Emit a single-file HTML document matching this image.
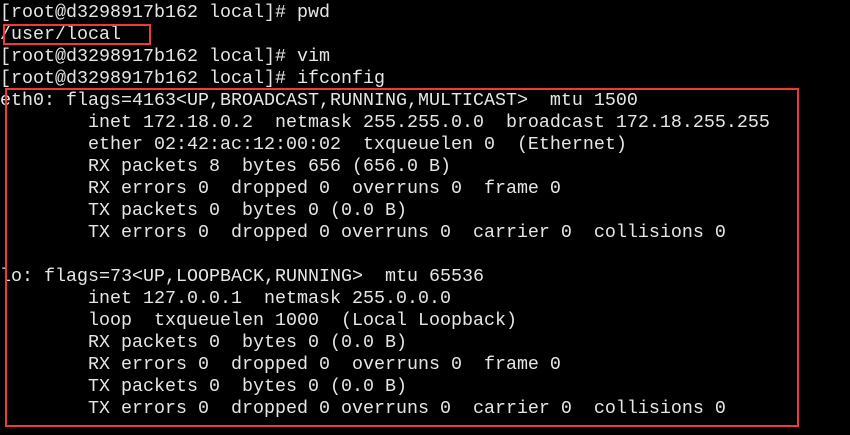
<!DOCTYPE html><html><head><style>
body{margin:0;width:850px;height:435px;background:#000;overflow:hidden;position:relative}
pre{margin:0;position:absolute;left:0;top:2px;font-family:"Liberation Mono",monospace;font-size:18.33px;line-height:22px;color:#e6e6e6}
.b{position:absolute;border:2px solid #f03a3a;box-sizing:border-box}
</style></head><body>
<pre>[root@d3298917b162 local]# pwd
/user/local
[root@d3298917b162 local]# vim
[root@d3298917b162 local]# ifconfig
eth0: flags=4163&lt;UP,BROADCAST,RUNNING,MULTICAST&gt;  mtu 1500
        inet 172.18.0.2  netmask 255.255.0.0  broadcast 172.18.255.255
        ether 02:42:ac:12:00:02  txqueuelen 0  (Ethernet)
        RX packets 8  bytes 656 (656.0 B)
        RX errors 0  dropped 0  overruns 0  frame 0
        TX packets 0  bytes 0 (0.0 B)
        TX errors 0  dropped 0 overruns 0  carrier 0  collisions 0

lo: flags=73&lt;UP,LOOPBACK,RUNNING&gt;  mtu 65536
        inet 127.0.0.1  netmask 255.0.0.0
        loop  txqueuelen 1000  (Local Loopback)
        RX packets 0  bytes 0 (0.0 B)
        RX errors 0  dropped 0  overruns 0  frame 0
        TX packets 0  bytes 0 (0.0 B)
        TX errors 0  dropped 0 overruns 0  carrier 0  collisions 0</pre>
<div class="b" style="left:3px;top:24px;width:148px;height:21px"></div>
<div class="b" style="left:5px;top:88px;width:794px;height:339px"></div>
</body></html>
